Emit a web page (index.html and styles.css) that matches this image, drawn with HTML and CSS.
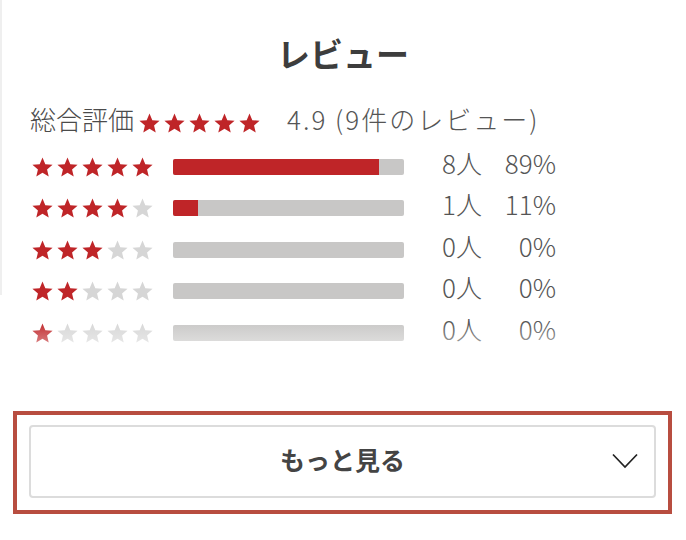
FILE: index.html
```html
<!DOCTYPE html>
<html lang="ja">
<head>
<meta charset="UTF-8">
<title>レビュー</title>
<link rel="stylesheet" href="styles.css">
</head>
<body>
  <svg width="0" height="0" class="defs">
    <symbol id="star" viewBox="0.6 0.6 22.8 21.6">
      <polygon points="12,1 15.06,8.29 22.94,8.95 16.95,14.11 18.76,21.8 12,17.7 5.24,21.8 7.05,14.11 1.06,8.95 8.94,8.29"/>
    </symbol>
  </svg>

  <!-- ============  Review summary  ============ -->
  <section class="reviews">
    <h2>レビュー</h2>

    <div class="summary">
      <span class="summary-label">総合評価</span>
      <span class="stars stars-sm">
        <svg class="on"><use href="#star"/></svg><svg class="on"><use href="#star"/></svg><svg class="on"><use href="#star"/></svg><svg class="on"><use href="#star"/></svg><svg class="on"><use href="#star"/></svg>
      </span>
      <span class="summary-score">4.9 (9件のレビュー)</span>
    </div>

    <div class="dist">
      <div class="row">
        <span class="stars"><svg class="on"><use href="#star"/></svg><svg class="on"><use href="#star"/></svg><svg class="on"><use href="#star"/></svg><svg class="on"><use href="#star"/></svg><svg class="on"><use href="#star"/></svg></span>
        <span class="bar"><span class="fill" style="width:89%"></span></span>
        <span class="count">8人</span>
        <span class="pct">89%</span>
      </div>
      <div class="row">
        <span class="stars"><svg class="on"><use href="#star"/></svg><svg class="on"><use href="#star"/></svg><svg class="on"><use href="#star"/></svg><svg class="on"><use href="#star"/></svg><svg><use href="#star"/></svg></span>
        <span class="bar"><span class="fill" style="width:11%"></span></span>
        <span class="count">1人</span>
        <span class="pct">11%</span>
      </div>
      <div class="row">
        <span class="stars"><svg class="on"><use href="#star"/></svg><svg class="on"><use href="#star"/></svg><svg class="on"><use href="#star"/></svg><svg><use href="#star"/></svg><svg><use href="#star"/></svg></span>
        <span class="bar"><span class="fill" style="width:0%"></span></span>
        <span class="count">0人</span>
        <span class="pct">0%</span>
      </div>
      <div class="row">
        <span class="stars"><svg class="on"><use href="#star"/></svg><svg class="on"><use href="#star"/></svg><svg><use href="#star"/></svg><svg><use href="#star"/></svg><svg><use href="#star"/></svg></span>
        <span class="bar"><span class="fill" style="width:0%"></span></span>
        <span class="count">0人</span>
        <span class="pct">0%</span>
      </div>
      <div class="row">
        <span class="stars"><svg class="on"><use href="#star"/></svg><svg><use href="#star"/></svg><svg><use href="#star"/></svg><svg><use href="#star"/></svg><svg><use href="#star"/></svg></span>
        <span class="bar"><span class="fill" style="width:0%"></span></span>
        <span class="count">0人</span>
        <span class="pct">0%</span>
      </div>
    </div>

    <!-- ============  Show more  ============ -->
    <div class="more">
      <button type="button" class="more-btn">
        <span></span>
        <span class="more-label">もっと見る</span>
        <svg class="chevron" width="26" height="16" viewBox="0 0 26 16"><polyline points="1,1.5 13,14 25,1.5"/></svg>
      </button>
    </div>
  </section>
</body>
</html>
```

FILE: styles.css
```css
/* page */
body{
  margin:0;
  background:#fff;
  font-family:"Noto Sans CJK JP", "Noto Sans", sans-serif;
  color:#555;
  position:relative;
}
body::before{
  content:"";
  position:absolute;
  left:0; top:0;
  width:2px; height:295px;
  background:#efefef;
}
.defs{ position:absolute }

.reviews{ padding-top:33px }

h2{
  margin:0;
  text-align:center;
  font-size:33px;
  line-height:40px;
  font-weight:700;
  color:#3d3d3d;
}

/* stars */
.stars{
  display:inline-flex;
  gap:4px;
}
.stars svg{
  width:21px; height:20px;
  fill:#d6d6d6;
}
.stars svg.on{ fill:#bf2528 }

/* summary line */
.summary{
  margin-top:29px;
  padding-left:30px;
  display:flex;
  align-items:center;
  font-size:26px;
  line-height:34px;
  font-weight:300;
  color:#4b4b4b;
}
.stars-sm{ margin-left:5px; padding-top:8px }
.summary-score{ margin-left:27px; color:#555; letter-spacing:2px }

/* distribution */
.dist{
  position:relative;
  margin-top:10px;
  padding:0 0 22px 32px;
}
.dist::after{
  content:"";
  position:absolute;
  left:0; right:0; bottom:0;
  height:55px;
  background:linear-gradient(rgba(255,255,255,0), #fff);
}
.row{
  display:grid;
  grid-template-columns:141px 231px 38px 45px 69px;
  align-items:center;
  height:41.5px;
  font-size:26px;
  font-weight:300;
}
.bar{
  grid-column:2;
  height:16px;
  border-radius:2px;
  background:#c8c7c6;
  overflow:hidden;
}
.fill{
  display:block;
  height:100%;
  background:#bf2528;
}
.count,
.pct{ line-height:1; padding-bottom:8px }
.count{ grid-column:4 }
.pct{ grid-column:5; text-align:right }

/* show more */
.more{
  margin:35px 14px 0 13px;
  border:4px solid #b84d40;
  padding:10px 12px 12px;
}
.more-btn{
  display:grid;
  grid-template-columns:1fr auto 1fr;
  align-items:center;
  width:100%;
  height:73px;
  box-sizing:border-box;
  border:2px solid #dcdcdc;
  border-radius:4px;
  background:#fff;
  padding:0 16px;
  font-family:inherit;
  cursor:pointer;
}
.more-label{
  font-size:25px;
  font-weight:700;
  color:#444;
  padding-bottom:4px;
}
.chevron{
  justify-self:end;
  fill:none;
  stroke:#222;
  stroke-width:1.7;
}
```
